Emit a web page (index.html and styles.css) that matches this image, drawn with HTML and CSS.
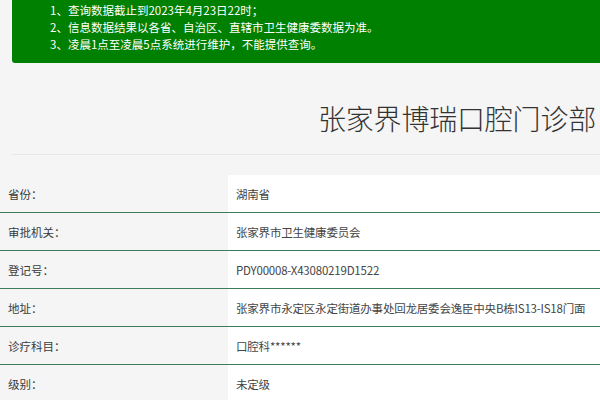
FILE: index.html
```html
<!DOCTYPE html>
<html lang="zh">
<head>
<meta charset="utf-8">
<link rel="stylesheet" href="styles.css">
</head>
<body>
<div class="notice">
  <p>1、查询数据截止到2023年4月23日22时；</p>
  <p>2、信息数据结果以各省、自治区、直辖市卫生健康委数据为准。</p>
  <p>3、凌晨1点至凌晨5点系统进行维护，不能提供查询。</p>
</div>
<div class="title-wrap">
  <h1 class="title">张家界博瑞口腔门诊部</h1>
</div>
<div class="table">
  <div class="row"><div class="label">省份：</div><div class="value">湖南省</div></div>
  <div class="row"><div class="label">审批机关：</div><div class="value">张家界市卫生健康委员会</div></div>
  <div class="row"><div class="label">登记号：</div><div class="value">PDY00008-X43080219D1522</div></div>
  <div class="row"><div class="label">地址：</div><div class="value">张家界市永定区永定街道办事处回龙居委会逸臣中央B栋IS13-IS18门面</div></div>
  <div class="row"><div class="label">诊疗科目：</div><div class="value">口腔科******</div></div>
  <div class="row"><div class="label">级别：</div><div class="value">未定级</div></div>
</div>
</body>
</html>
```
FILE: styles.css
```css
html, body {
  margin: 0;
  padding: 0;
  background: #f5f5f5;
  font-family: "Microsoft YaHei", "Noto Sans CJK SC", "Liberation Sans", sans-serif;
  overflow: hidden;
}
.notice {
  margin: -10px 0 0 12px;
  background: #008000;
  color: #fff;
  font-size: 11.5px;
  line-height: 17px;
  padding: 12px 0 9px 38px;
  border-radius: 0 0 0 3px;
  height: 52px;
  box-sizing: content-box;
}
.notice p { margin: 0; }
.title-wrap {
  margin: 0 0 20px 12px;
  border-bottom: 1px solid #e6e6e6;
  height: 91px;
  display: flex;
  align-items: center;
  padding-left: 306px;
}
.title {
  margin: 18px 0 0 0;
  font-size: 28px;
  font-weight: 300;
  color: #333;
  white-space: nowrap;
  letter-spacing: -0.2px;
}
.row {
  display: grid;
  grid-template-columns: 228px 1fr;
  height: 37px;
  border-bottom: 1px solid #3f7a5c;
  font-size: 11.5px;
}
.label {
  padding-left: 8px;
  color: #3a3a3a;
  display: flex;
  align-items: center;
}
.value {
  background: #fff;
  padding-left: 8px;
  color: #444;
  display: flex;
  align-items: center;
  white-space: nowrap;
  letter-spacing: -0.2px;
}
```
